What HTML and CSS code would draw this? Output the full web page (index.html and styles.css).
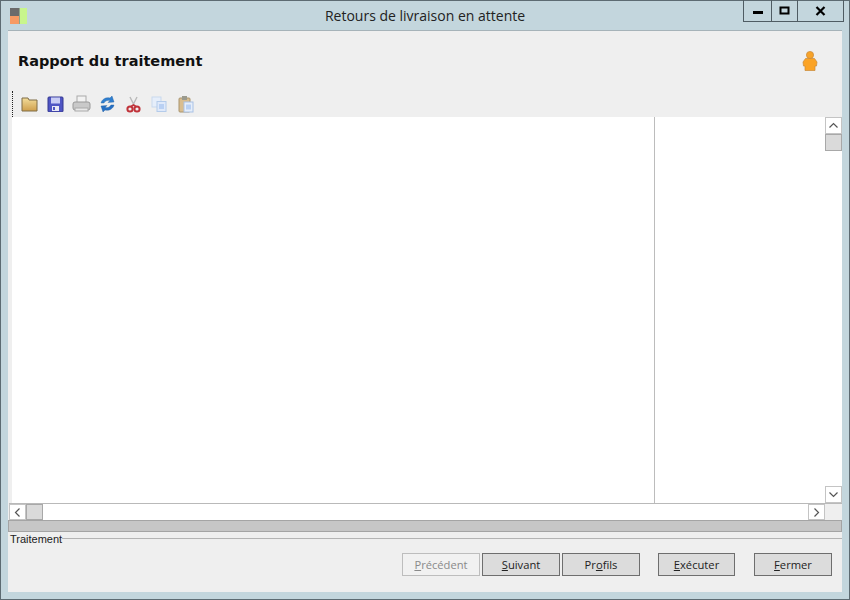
FILE: index.html
```html
<!DOCTYPE html>
<html lang="fr">
<head>
<meta charset="utf-8">
<title>Retours de livraison en attente</title>
<link rel="stylesheet" href="styles.css">
</head>
<body>
<div class="window">
  <div class="titlebar">
    <svg class="app-icon" width="17" height="17" viewBox="0 0 17 17"><rect x="0" y="0" width="9" height="8" fill="#6b6b6b"/><rect x="0" y="8" width="9" height="8" fill="#f79a63"/><rect x="9" y="0" width="8" height="16" fill="#c8f58c"/><rect x="9" y="0" width="1" height="16" fill="#8fa58a"/></svg>
    <div class="title">Retours de livraison en attente</div>
    <div class="controls">
      <div class="ctl ctl-min"><svg width="14" height="8" viewBox="0 0 14 8"><rect x="2" y="4" width="10" height="3" fill="#000"/></svg></div>
      <div class="ctl ctl-max"><svg width="12" height="10" viewBox="0 0 12 10"><rect x="1.5" y="1.5" width="8" height="6" fill="none" stroke="#000" stroke-width="2"/></svg></div>
      <div class="ctl ctl-close"><svg width="12" height="10" viewBox="0 0 12 10"><path d="M1.5 1 L9.5 9 M9.5 1 L1.5 9" stroke="#000" stroke-width="2.2"/></svg></div>
    </div>
  </div>
  <div class="panel">
    <div class="header">
      <h1 class="heading">Rapport du traitement</h1>
      <svg class="user" width="18" height="22" viewBox="0 0 18 22"><circle cx="9" cy="5" r="3.6" fill="#f7a32a" stroke="#c98a3a" stroke-width=".7"/><path d="M4.5 8.5 H13.5 L16 12 L15.5 16 L14 16 V20.5 H4 V16 L2.5 16 L2 12 Z" fill="#fba325" stroke="#c98a3a" stroke-width=".7"/></svg>
    </div>
    <div class="toolbar">
      <div class="grip"></div>
      <svg class="tool tool-folder" width="17" height="16" viewBox="0 0 17 16"><defs><linearGradient id="fold" x1="0" y1="0" x2="0" y2="1"><stop offset="0" stop-color="#f2dc9a"/><stop offset="1" stop-color="#cf9f4c"/></linearGradient></defs><path d="M1 2 H7 L8 4 H16 V15 H1 Z" fill="url(#fold)" stroke="#7f6d47"/></svg>
      <svg class="tool tool-save" width="17" height="16" viewBox="0 0 17 16"><rect x="1" y="1" width="15" height="15" rx="1" fill="#4f55c4" stroke="#34388f"/><rect x="4" y="1.5" width="9" height="6" fill="#c8ccf5"/><rect x="5" y="10" width="7" height="5" fill="#e8e8f5"/><rect x="6" y="11" width="2" height="3" fill="#4f55c4"/></svg>
      <svg class="tool tool-print" width="19" height="18" viewBox="0 0 19 18"><rect x="5" y="1" width="9" height="7" fill="#f2f2f2" stroke="#aaa"/><rect x="1" y="7" width="17" height="8" rx="2" fill="#c9c9c9" stroke="#999"/><rect x="3" y="13" width="13" height="3" fill="#e9e9e9" stroke="#aaa"/></svg>
      <svg class="tool tool-sync" width="17" height="18" viewBox="0 0 17 18"><path d="M2 8 C3 4 7 2 11 3 L13 1 L15 7 L9 7.5 L11 5.5 C8 5 6 6 5 8 Z" fill="#2f7fd0" stroke="#1c5a9e" stroke-width=".4"/><path d="M15 10 C14 14 10 16 6 15 L4 17 L2 11 L8 10.5 L6 12.5 C9 13 11 12 12 10 Z" fill="#2670c4" stroke="#1c5a9e" stroke-width=".4"/></svg>
      <svg class="tool tool-cut" width="15" height="17" viewBox="0 0 15 17"><path d="M4 1 L8.5 10 M11 1 L6.5 10" stroke="#b9b9b9" stroke-width="1.4"/><circle cx="4" cy="13" r="2.6" fill="none" stroke="#c0333a" stroke-width="2"/><circle cx="11" cy="13" r="2.6" fill="none" stroke="#c0333a" stroke-width="2"/><path d="M5 10.5 L7.5 9 L10 10.5" fill="none" stroke="#c0333a" stroke-width="1.6"/></svg>
      <svg class="tool tool-copy" width="16" height="16" viewBox="0 0 16 16"><rect x="1" y="1" width="9" height="10" fill="#e6eefa" stroke="#c9d9ee"/><rect x="6" y="5.5" width="9" height="10" fill="#dfe9fa" stroke="#b4cbea"/><rect x="8" y="8" width="5" height="5" fill="#b9d0f3"/></svg>
      <svg class="tool" width="16" height="18" viewBox="0 0 16 18"><rect x="1" y="3" width="11" height="14" rx="1" fill="#d9bd8f" stroke="#a8946f"/><rect x="4" y="1" width="5" height="4" fill="#9a9a8e"/><rect x="6" y="7" width="9" height="10" fill="#e6eefa" stroke="#a9c2e6"/><rect x="8" y="9.5" width="5" height="5" fill="#b9d0f3"/></svg>
    </div>
    <div class="report">
      <div class="report-main">
        <div class="pane-left"></div>
        <div class="pane-right"></div>
        <div class="vscroll">
          <div class="sb-btn sb-v"><svg width="11" height="7" viewBox="0 0 11 7"><path d="M1.5 5.5 L5.5 1.5 L9.5 5.5" fill="none" stroke="#555" stroke-width="1.2"/></svg></div>
          <div class="thumb-v"></div>
          <div class="sb-track"></div>
          <div class="sb-btn sb-v"><svg width="11" height="7" viewBox="0 0 11 7"><path d="M1.5 1.5 L5.5 5.5 L9.5 1.5" fill="none" stroke="#555" stroke-width="1.2"/></svg></div>
        </div>
      </div>
      <div class="hscroll">
        <div class="sb-btn sb-h"><svg width="7" height="11" viewBox="0 0 7 11"><path d="M5.5 1.5 L1.5 5.5 L5.5 9.5" fill="none" stroke="#555" stroke-width="1.2"/></svg></div>
        <div class="thumb-h"></div>
        <div class="sb-track"></div>
        <div class="sb-btn sb-h"><svg width="7" height="11" viewBox="0 0 7 11"><path d="M1.5 1.5 L5.5 5.5 L1.5 9.5" fill="none" stroke="#555" stroke-width="1.2"/></svg></div>
        <div class="corner"></div>
      </div>
    </div>
    <div class="progress"></div>
    <div class="group">
      <span class="group-label">Traitement</span>
      <div class="group-line"></div>
    </div>
    <div class="buttons">
      <button class="btn btn-disabled"><u>P</u>récédent</button>
      <button class="btn btn-gap-s"><u>S</u>uivant</button>
      <button class="btn btn-gap-s">Pr<u>o</u>fils</button>
      <button class="btn btn-gap-l"><u>E</u>xécuter</button>
      <button class="btn btn-gap-m"><u>F</u>ermer</button>
    </div>
  </div>
</div>
</body>
</html>
```
FILE: styles.css
```css
* { box-sizing: border-box; }
html, body { margin: 0; padding: 0; }
body { width: 850px; height: 600px; overflow: hidden; font-family: "Open Sans", "Noto Sans", sans-serif; }
.window {
  width: 850px; height: 600px;
  background: #c3d6dd;
  border: 1px solid #5d6b72;
  display: flex; flex-direction: column;
  padding: 0 7px 7px;
}
.titlebar { height: 29px; flex: none; display: flex; align-items: flex-start; position: relative; }
.app-icon { margin: 7px 0 0 2px; flex: none; }
.title { position: absolute; left: 0; right: 0; top: 5px; text-align: center; font-size: 14px; line-height: 20px; color: #222; }
.controls {
  position: absolute; right: -2px; top: -1px;
  display: flex; width: 101px; height: 22px;
  border: 1px solid #4f5c63; border-top: 0;
  z-index: 1;
}
.ctl { display: flex; align-items: center; justify-content: center; height: 100%; }
.ctl-min { width: 28px; border-right: 1px solid #4f5c63; }
.ctl-max { width: 26px; border-right: 1px solid #4f5c63; }
.ctl-close { flex: 1; }
.panel { flex: 1; min-height: 0; display: flex; flex-direction: column; background: #efefef; border-top: 1px solid #a6b3b9; }
.header { height: 58px; flex: none; display: flex; align-items: center; justify-content: space-between; padding: 1px 23px 0 10px; }
.heading { margin: 0; font-family: "DejaVu Sans", sans-serif; font-size: 14.5px; font-weight: 700; color: #111; }
.user { flex: none; margin-top: 0; }
.toolbar { height: 28px; flex: none; display: flex; align-items: center; padding: 2px 0 0 4px; }
.grip { width: 1px; height: 26px; border-left: 1px dotted #222; margin-right: 8px; }
.tool { flex: none; }
.tool-folder { margin-right: 9px; }
.tool-save { margin-right: 8px; }
.tool-print { margin-right: 8px; }
.tool-sync { margin-right: 10px; }
.tool-cut { margin-right: 10px; }
.tool-copy { margin-right: 11px; }
.report { height: 403px; flex: none; display: flex; flex-direction: column; padding-left: 1px; }
.report-main { flex: 1; min-height: 0; display: flex; padding-left: 3px; background: #efefef; }
.pane-left { width: 643px; background: #fff; border-right: 1px solid #bcbcbc; }
.pane-right { flex: 1; background: #fff; }
.vscroll { width: 17px; flex: none; display: flex; flex-direction: column; background: #fff; }
.sb-btn { display: flex; align-items: center; justify-content: center; background: #fff; border: 1px solid #c4c4c4; flex: none; }
.sb-v { height: 17px; width: 17px; }
.sb-h { width: 17px; height: 16px; }
.sb-track { flex: 1; background: #fff; }
.thumb-v { height: 17px; background: #dadada; border: 1px solid #a8a8a8; flex: none; }
.thumb-h { width: 17px; background: #dadada; border: 1px solid #a8a8a8; flex: none; }
.hscroll { height: 17px; flex: none; display: flex; background: #fff; border-top: 1px solid #b9b9b9; }
.corner { width: 17px; background: #efefef; flex: none; }
.progress { height: 12px; flex: none; background: #c6c6c6; border: 1px solid #a4a4a4; }
.group { height: 13px; flex: none; display: flex; align-items: center; margin-top: 1px; padding-left: 2px; }
.group-label { font-family: "Liberation Sans", sans-serif; font-size: 11px; line-height: 13px; color: #222; }
.group-line { flex: 1; height: 1px; background: #b4b4b4; margin-top: -3px; }
.buttons { display: flex; justify-content: flex-end; padding: 7px 10px 0 0; }
.btn {
  width: 78px; height: 23px; padding: 0; flex: none;
  font-family: "Open Sans", "Noto Sans", sans-serif; font-size: 11.2px; color: #222;
  background: #dcdcdc; border: 1px solid #6e6e6e;
}
.btn-disabled { background: #f1f1f1; border-color: #bdbdbd; color: #8a8a8a; }
.btn-gap-s { margin-left: 2px; }
.btn-gap-l { margin-left: 18px; width: 77px; }
.btn-gap-m { margin-left: 19px; }
```
